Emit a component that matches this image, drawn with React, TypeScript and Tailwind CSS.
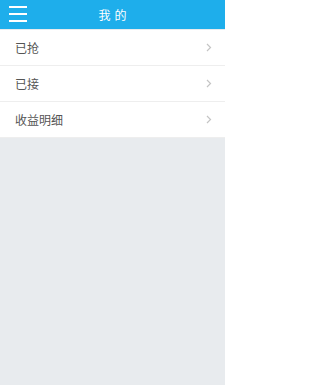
const items = ["已抢", "已接", "收益明细"];

function Chevron() {
  return (
    <svg width="6" height="9" viewBox="0 0 6 9" className="text-[#c4c4c4]">
      <path d="M1 1l3.5 3.5L1 8" fill="none" stroke="currentColor" strokeWidth="1.2" />
    </svg>
  );
}

export default function App() {
  return (
    <div
      className="flex flex-col w-[225px] h-[385px] bg-[#e8ebee]"
      style={{ fontFamily: '"Noto Sans CJK SC", "Noto Sans", sans-serif' }}
    >
      <header className="relative flex items-center justify-center h-[29px] bg-[#1eaeeb] shrink-0">
        <button className="absolute left-[9px] top-[6px] flex flex-col gap-[5px]">
          <span className="block w-[18px] h-[2px] bg-white" />
          <span className="block w-[18px] h-[2px] bg-white" />
          <span className="block w-[18px] h-[2px] bg-white" />
        </button>
        <h1 className="text-white text-[12px] tracking-[4px] pl-[4px] leading-none">我的</h1>
      </header>
      <ul className="bg-white mt-[1px]">
        {items.map((t) => (
          <li
            key={t}
            className="flex items-center justify-between h-[36px] pl-[15px] pr-[13px] border-b border-[#eeeeee] text-[12px] text-[#555555]"
          >
            <span>{t}</span>
            <Chevron />
          </li>
        ))}
      </ul>
    </div>
  );
}
